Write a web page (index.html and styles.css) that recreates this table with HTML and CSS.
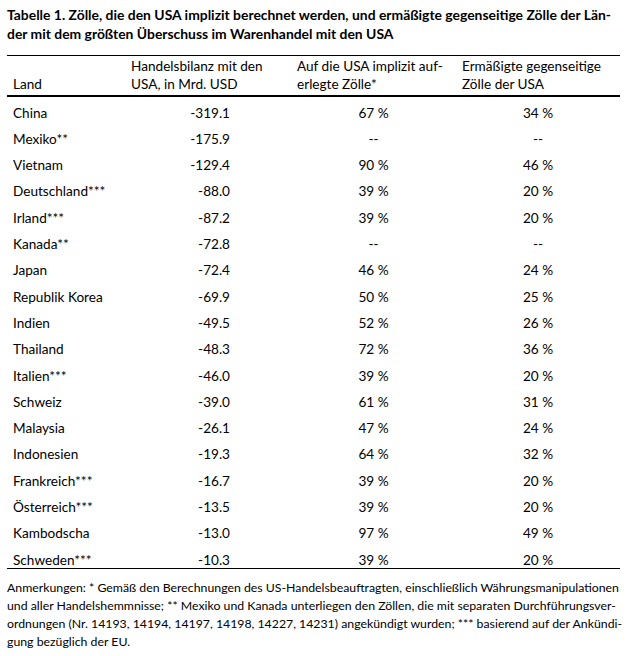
FILE: index.html
```html
<!DOCTYPE html>
<html lang="de">
<head>
<meta charset="utf-8">
<link rel="stylesheet" href="styles.css">
<title>Tabelle 1</title>
</head>
<body>
<div class="page">
  <h1 class="title">Tabelle 1. Zölle, die den USA implizit berechnet werden, und ermäßigte gegenseitige Zölle der Län-<br>der mit dem größten Überschuss im Warenhandel mit den USA</h1>
  <table class="tbl">
    <thead>
      <tr>
        <th class="c1">Land</th>
        <th class="c2">Handelsbilanz mit den<br>USA, in Mrd. USD</th>
        <th class="c3">Auf die USA implizit auf-<br>erlegte Zölle*</th>
        <th class="c4">Ermäßigte gegenseitige<br>Zölle der USA</th>
      </tr>
    </thead>
    <tbody>
      <tr><td class="c1">China</td><td class="c2">-319.1</td><td class="c3">67 %</td><td class="c4">34 %</td></tr>
      <tr><td class="c1">Mexiko**</td><td class="c2">-175.9</td><td class="c3">--</td><td class="c4">--</td></tr>
      <tr><td class="c1">Vietnam</td><td class="c2">-129.4</td><td class="c3">90 %</td><td class="c4">46 %</td></tr>
      <tr><td class="c1">Deutschland***</td><td class="c2">-88.0</td><td class="c3">39 %</td><td class="c4">20 %</td></tr>
      <tr><td class="c1">Irland***</td><td class="c2">-87.2</td><td class="c3">39 %</td><td class="c4">20 %</td></tr>
      <tr><td class="c1">Kanada**</td><td class="c2">-72.8</td><td class="c3">--</td><td class="c4">--</td></tr>
      <tr><td class="c1">Japan</td><td class="c2">-72.4</td><td class="c3">46 %</td><td class="c4">24 %</td></tr>
      <tr><td class="c1">Republik Korea</td><td class="c2">-69.9</td><td class="c3">50 %</td><td class="c4">25 %</td></tr>
      <tr><td class="c1">Indien</td><td class="c2">-49.5</td><td class="c3">52 %</td><td class="c4">26 %</td></tr>
      <tr><td class="c1">Thailand</td><td class="c2">-48.3</td><td class="c3">72 %</td><td class="c4">36 %</td></tr>
      <tr><td class="c1">Italien***</td><td class="c2">-46.0</td><td class="c3">39 %</td><td class="c4">20 %</td></tr>
      <tr><td class="c1">Schweiz</td><td class="c2">-39.0</td><td class="c3">61 %</td><td class="c4">31 %</td></tr>
      <tr><td class="c1">Malaysia</td><td class="c2">-26.1</td><td class="c3">47 %</td><td class="c4">24 %</td></tr>
      <tr><td class="c1">Indonesien</td><td class="c2">-19.3</td><td class="c3">64 %</td><td class="c4">32 %</td></tr>
      <tr><td class="c1">Frankreich***</td><td class="c2">-16.7</td><td class="c3">39 %</td><td class="c4">20 %</td></tr>
      <tr><td class="c1">Österreich***</td><td class="c2">-13.5</td><td class="c3">39 %</td><td class="c4">20 %</td></tr>
      <tr><td class="c1">Kambodscha</td><td class="c2">-13.0</td><td class="c3">97 %</td><td class="c4">49 %</td></tr>
      <tr><td class="c1">Schweden***</td><td class="c2">-10.3</td><td class="c3">39 %</td><td class="c4">20 %</td></tr>
    </tbody>
  </table>
  <p class="notes">Anmerkungen: * Gemäß den Berechnungen des US-Handelsbeauftragten, einschließlich Währungsmanipulationen<br>und aller Handelshemmnisse; ** Mexiko und Kanada unterliegen den Zöllen, die mit separaten Durchführungsver-<br>ordnungen (Nr. 14193, 14194, 14197, 14198, 14227, 14231) angekündigt wurden; *** basierend auf der Ankündi-<br>gung bezüglich der EU.</p>
</div>
</body>
</html>
```

FILE: styles.css
```css
html, body {
  margin: 0;
  padding: 0;
  background: #ffffff;
}

body {
  font-family: "Lato", "Open Sans", sans-serif;
  color: #000000;
}

.page {
  width: 613px;
  padding: 5px 0 0 7px;
}

.title {
  margin: 0;
  font-size: 13.9px;
  font-weight: 700;
  line-height: 19px;
  white-space: nowrap;
}

.tbl {
  margin-top: 12px;
  width: 613px;
  border-collapse: separate;
  border-spacing: 0;
  table-layout: fixed;
  font-size: 13.6px;
}

.tbl th,
.tbl td {
  padding: 0 6px;
  white-space: nowrap;
  font-weight: 400;
}

.tbl th {
  text-align: left;
  vertical-align: bottom;
  line-height: 17.6px;
  padding-top: 2px;
  padding-bottom: 1.4px;
  border-top: 1px solid #000;
  border-bottom: 2px solid #000;
}

.tbl th.c1 { width: 106px; }
.tbl th.c2 { width: 154px; }
.tbl th.c3 { width: 153px; }
.tbl th.c4 { width: auto; }

.tbl td {
  line-height: 26.3px;
}

.tbl td.c2 {
  text-align: right;
  padding-right: 61px;
}

.tbl td.c3,
.tbl td.c4 {
  text-align: center;
}

.tbl tbody tr:first-child td {
  padding-top: 3px;
}

.tbl tbody tr:last-child td {
  line-height: 16px;
  padding-top: 5px;
  border-bottom: 1px solid #000;
}

.notes {
  margin: 10px 0 0;
  font-size: 12.3px;
  line-height: 18px;
  white-space: nowrap;
}
```
